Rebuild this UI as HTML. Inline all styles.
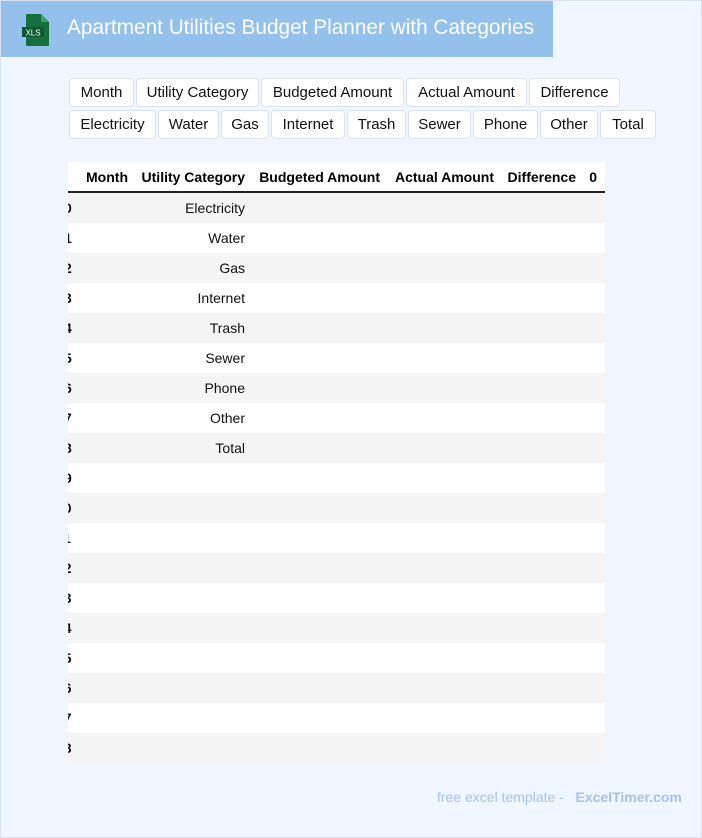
<!DOCTYPE html>
<html><head><meta charset="utf-8"><style>
*{margin:0;padding:0;box-sizing:border-box}
body{width:702px;height:838px;background:#eff6ff;position:relative;overflow:hidden;font-family:"Liberation Sans",sans-serif}
.frame{position:absolute;left:0;top:0;width:702px;height:838px;border:1px solid #d6e2ef}
.hdr{position:absolute;left:1px;top:1px;width:552px;height:56px;background:#93c1ec}
.title{position:absolute;left:66px;top:15px;color:#fff;font-size:20.8px;white-space:nowrap}
.btn{position:absolute;height:29px;border:1px solid #d9e3ee;border-radius:4px;background:#fff;font-size:15px;color:#111;line-height:28px;text-align:center}
.tbl{position:absolute;left:68px;top:162px;width:537px;height:601px;overflow:hidden}
.row{position:absolute;left:0;width:537px;height:30px;font-size:14px;color:#111}
.row span,.th span{position:absolute;white-space:nowrap}
.th{position:absolute;left:0;top:0;width:537px;height:31px;background:#fff;border-bottom:2px solid #222;font-weight:bold;font-size:14px;color:#000}
.g{background:#f4f4f4}.w{background:#fff}
.foot{position:absolute;left:437px;top:789px;font-size:14px;color:#a9bfee;white-space:nowrap}
</style></head><body>
<div class="frame"></div>
<div class="hdr">
<svg style="position:absolute;left:20px;top:12px" width="32" height="34" viewBox="0 0 32 34"><path d="M6 1h14l8 8v23a1 1 0 0 1-1 1H6a1 1 0 0 1-1-1V2a1 1 0 0 1 1-1z" fill="#16703e"/><path d="M20 1v8h8z" fill="#3aa066"/><rect x="1" y="14" width="22" height="10" fill="#0e5a30"/><text x="12" y="22.5" font-size="8" fill="#fff" text-anchor="middle" font-family="Liberation Sans">XLS</text></svg>
<div class="title">Apartment Utilities Budget Planner with Categories</div>
</div>
<div class="btn" style="left:69px;top:78px;width:65px">Month</div>
<div class="btn" style="left:136px;top:78px;width:123px">Utility Category</div>
<div class="btn" style="left:261px;top:78px;width:143px">Budgeted Amount</div>
<div class="btn" style="left:406px;top:78px;width:121px">Actual Amount</div>
<div class="btn" style="left:529px;top:78px;width:91px">Difference</div>
<div class="btn" style="left:69px;top:110px;width:87px">Electricity</div>
<div class="btn" style="left:158px;top:110px;width:61px">Water</div>
<div class="btn" style="left:221px;top:110px;width:48px">Gas</div>
<div class="btn" style="left:271px;top:110px;width:74px">Internet</div>
<div class="btn" style="left:347px;top:110px;width:59px">Trash</div>
<div class="btn" style="left:408px;top:110px;width:63px">Sewer</div>
<div class="btn" style="left:473px;top:110px;width:65px">Phone</div>
<div class="btn" style="left:540px;top:110px;width:58px">Other</div>
<div class="btn" style="left:600px;top:110px;width:56px">Total</div>
<div class="tbl">
<div class="th">
<span style="right:477px;top:7px">Month</span>
<span style="right:360px;top:7px">Utility Category</span>
<span style="right:225px;top:7px">Budgeted Amount</span>
<span style="right:111px;top:7px">Actual Amount</span>
<span style="right:29px;top:7px">Difference</span>
<span style="right:8px;top:7px">0</span>
</div>
<div class="row g" style="top:31px"><span style="left:-4px;top:7px;font-weight:bold">0</span><span style="right:360px;top:7px">Electricity</span></div>
<div class="row w" style="top:61px"><span style="left:-4px;top:7px;font-weight:bold">1</span><span style="right:360px;top:7px">Water</span></div>
<div class="row g" style="top:91px"><span style="left:-4px;top:7px;font-weight:bold">2</span><span style="right:360px;top:7px">Gas</span></div>
<div class="row w" style="top:121px"><span style="left:-4px;top:7px;font-weight:bold">3</span><span style="right:360px;top:7px">Internet</span></div>
<div class="row g" style="top:151px"><span style="left:-4px;top:7px;font-weight:bold">4</span><span style="right:360px;top:7px">Trash</span></div>
<div class="row w" style="top:181px"><span style="left:-4px;top:7px;font-weight:bold">5</span><span style="right:360px;top:7px">Sewer</span></div>
<div class="row g" style="top:211px"><span style="left:-4px;top:7px;font-weight:bold">6</span><span style="right:360px;top:7px">Phone</span></div>
<div class="row w" style="top:241px"><span style="left:-4px;top:7px;font-weight:bold">7</span><span style="right:360px;top:7px">Other</span></div>
<div class="row g" style="top:271px"><span style="left:-4px;top:7px;font-weight:bold">8</span><span style="right:360px;top:7px">Total</span></div>
<div class="row w" style="top:301px"><span style="left:-4px;top:7px;font-weight:bold">9</span></div>
<div class="row g" style="top:331px"><span style="left:-12px;top:7px;font-weight:bold">10</span></div>
<div class="row w" style="top:361px"><span style="left:-12px;top:7px;font-weight:bold">11</span></div>
<div class="row g" style="top:391px"><span style="left:-12px;top:7px;font-weight:bold">12</span></div>
<div class="row w" style="top:421px"><span style="left:-12px;top:7px;font-weight:bold">13</span></div>
<div class="row g" style="top:451px"><span style="left:-12px;top:7px;font-weight:bold">14</span></div>
<div class="row w" style="top:481px"><span style="left:-12px;top:7px;font-weight:bold">15</span></div>
<div class="row g" style="top:511px"><span style="left:-12px;top:7px;font-weight:bold">16</span></div>
<div class="row w" style="top:541px"><span style="left:-12px;top:7px;font-weight:bold">17</span></div>
<div class="row g" style="top:571px"><span style="left:-12px;top:7px;font-weight:bold">18</span></div>
</div>
<div class="foot">free excel template - &nbsp; <b>ExcelTimer.com</b></div>
</body></html>
